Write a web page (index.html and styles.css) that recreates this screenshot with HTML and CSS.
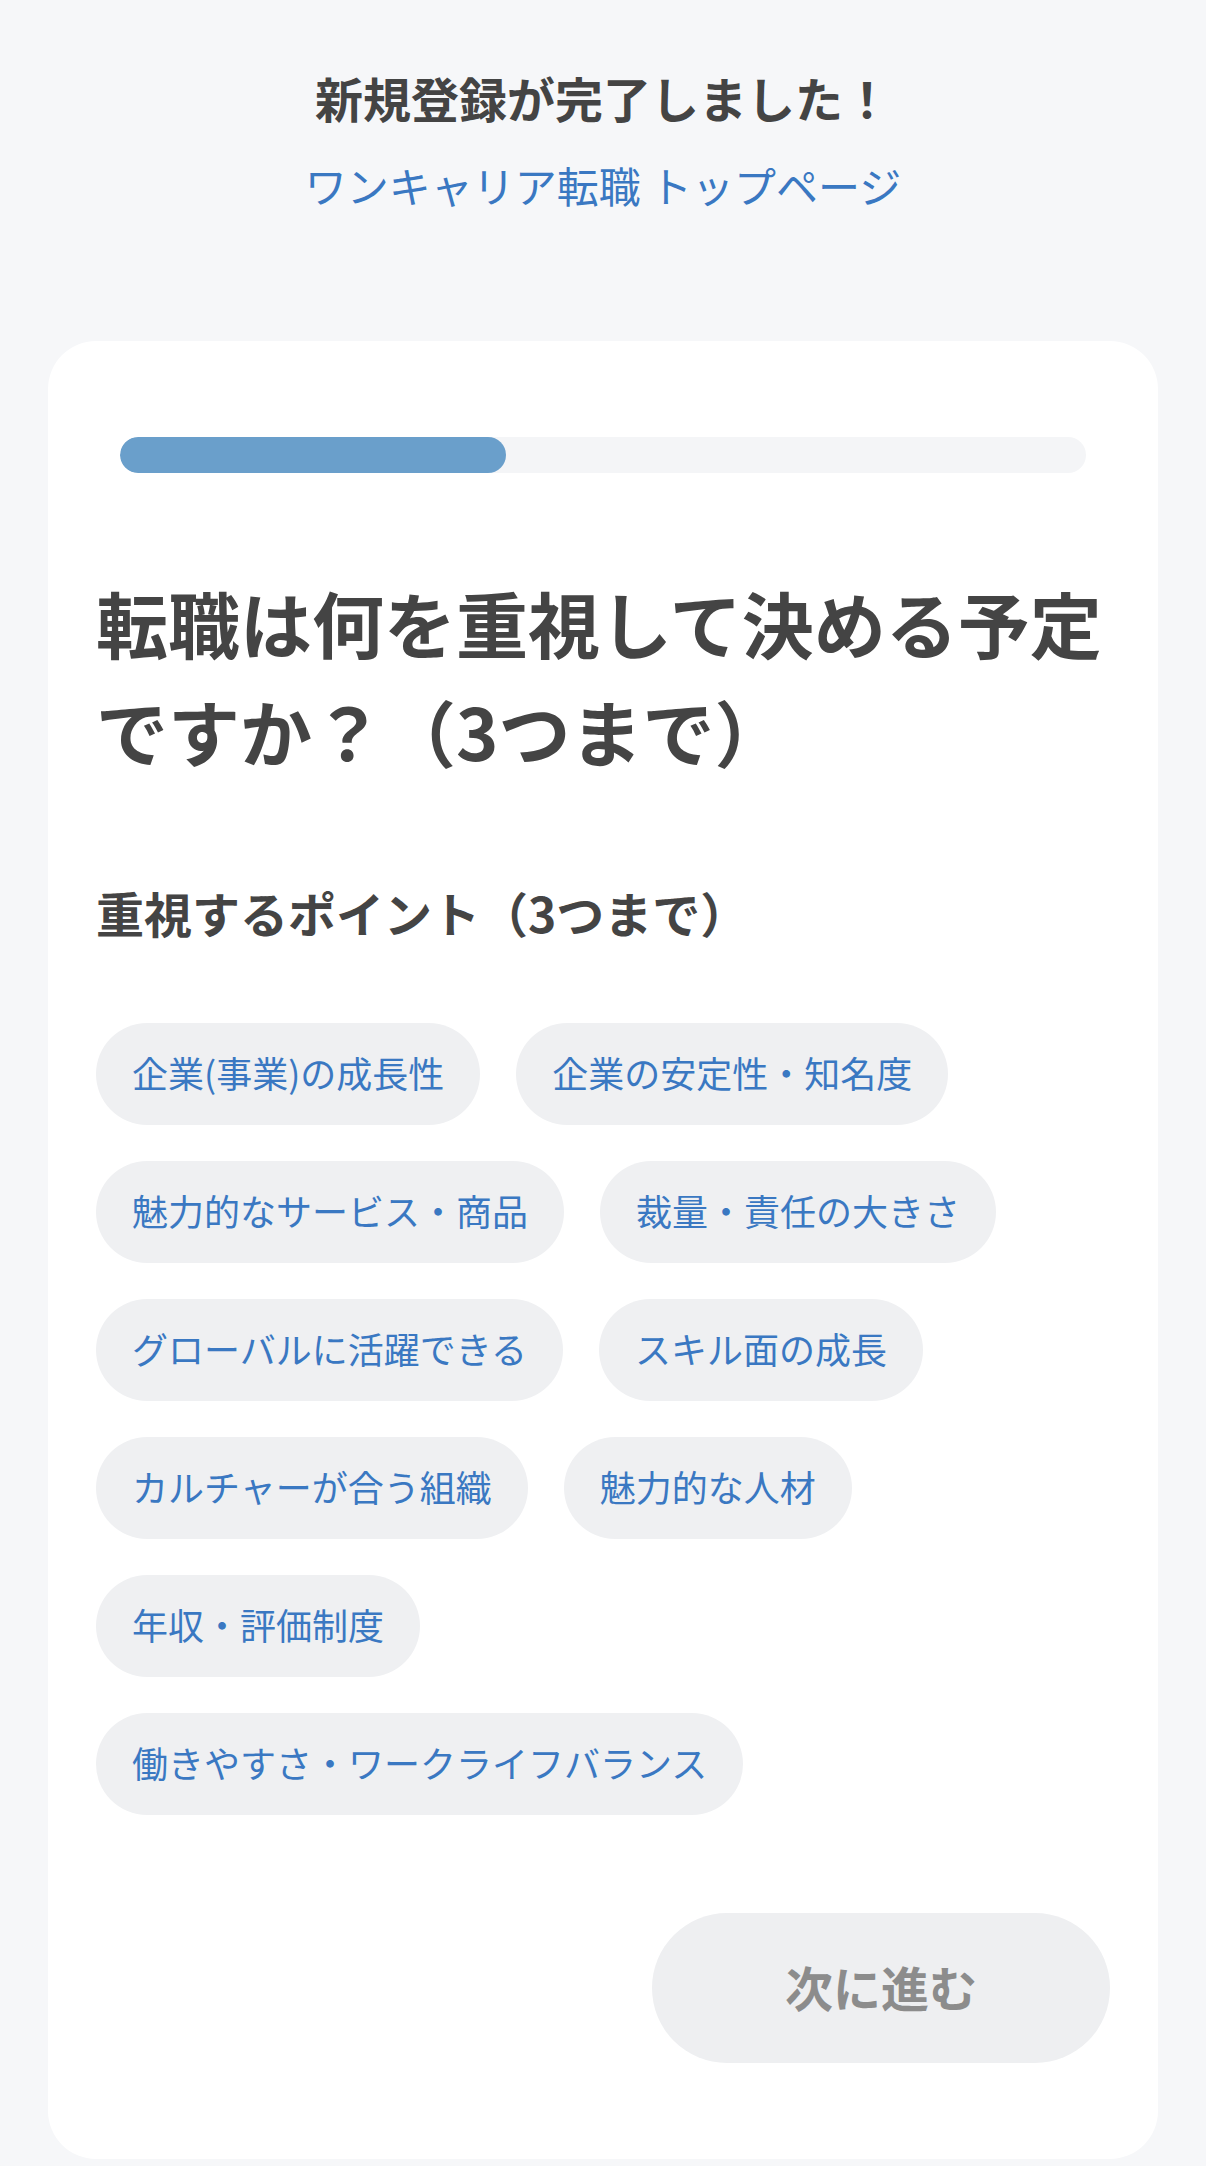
FILE: index.html
```html
<!DOCTYPE html>
<html lang="ja">
<head>
    <meta charset="UTF-8">
    <meta name="viewport" content="width=device-width, initial-scale=1.0">
    <title>新規登録が完了しました！</title>
    <link rel="stylesheet" href="styles.css">
</head>
<body>
    <header class="header">
        <h1 class="title">新規登録が完了しました！</h1>
        <a class="top-link" href="#">ワンキャリア転職 トップページ</a>
    </header>

    <main class="card">
        <div class="progress">
            <div class="progress-fill" style="width: 40%;"></div>
        </div>

        <h2 class="question">転職は何を重視して決める予定ですか？（3つまで）</h2>

        <h3 class="label">重視するポイント（3つまで）</h3>

        <ul class="chips">
            <li class="chip">企業(事業)の成長性</li>
            <li class="chip">企業の安定性・知名度</li>
            <li class="chip">魅力的なサービス・商品</li>
            <li class="chip">裁量・責任の大きさ</li>
            <li class="chip">グローバルに活躍できる</li>
            <li class="chip">スキル面の成長</li>
            <li class="chip">カルチャーが合う組織</li>
            <li class="chip">魅力的な人材</li>
            <li class="chip">年収・評価制度</li>
            <li class="chip">働きやすさ・ワークライフバランス</li>
        </ul>

        <div class="actions">
            <button class="next-btn" disabled>次に進む</button>
        </div>
    </main>
</body>
</html>
```

FILE: styles.css
```css
body {
    font-family: "Noto Sans CJK JP", "Noto Sans", sans-serif;
    background-color: #f6f7f9;
    color: #444444;
    margin: 0;
    padding: 0;
}

.header {
    padding-top: 63px;
    text-align: center;
}

.title {
    margin: 0;
    font-size: 48px;
    line-height: 68px;
    font-weight: 700;
}

.top-link {
    display: block;
    margin-top: 24px;
    font-size: 42px;
    line-height: 60px;
    color: #3a78c2;
    text-decoration: none;
}

.card {
    margin: 126px 48px 0;
    padding: 96px 48px 96px;
    background: #ffffff;
    border-radius: 48px;
}

.progress {
    margin: 0 24px;
    height: 36px;
    border-radius: 18px;
    background: #f4f5f7;
    overflow: hidden;
}

.progress-fill {
    height: 100%;
    border-radius: 18px;
    background: #6a9fcb;
}

.question {
    margin: 95px 0 0;
    font-size: 72px;
    line-height: 108px;
    font-weight: 700;
}

.label {
    margin: 94px 0 0;
    font-size: 48px;
    line-height: 68px;
    font-weight: 700;
}

.chips {
    list-style: none;
    margin: 77px 24px 0 0;
    padding: 0;
    display: flex;
    flex-wrap: wrap;
    gap: 36px;
}

.chip {
    padding: 22px 36px 26px;
    font-size: 36px;
    line-height: 54px;
    color: #3a78c2;
    background: #eff0f2;
    border-radius: 51px;
}

.actions {
    margin-top: 98px;
    display: flex;
    justify-content: flex-end;
}

.next-btn {
    width: 458px;
    height: 150px;
    padding: 0 0 5px;
    border: none;
    border-radius: 75px;
    background: #eeeff1;
    color: #8c8c8c;
    font-family: inherit;
    font-size: 48px;
    font-weight: 700;
}
```
